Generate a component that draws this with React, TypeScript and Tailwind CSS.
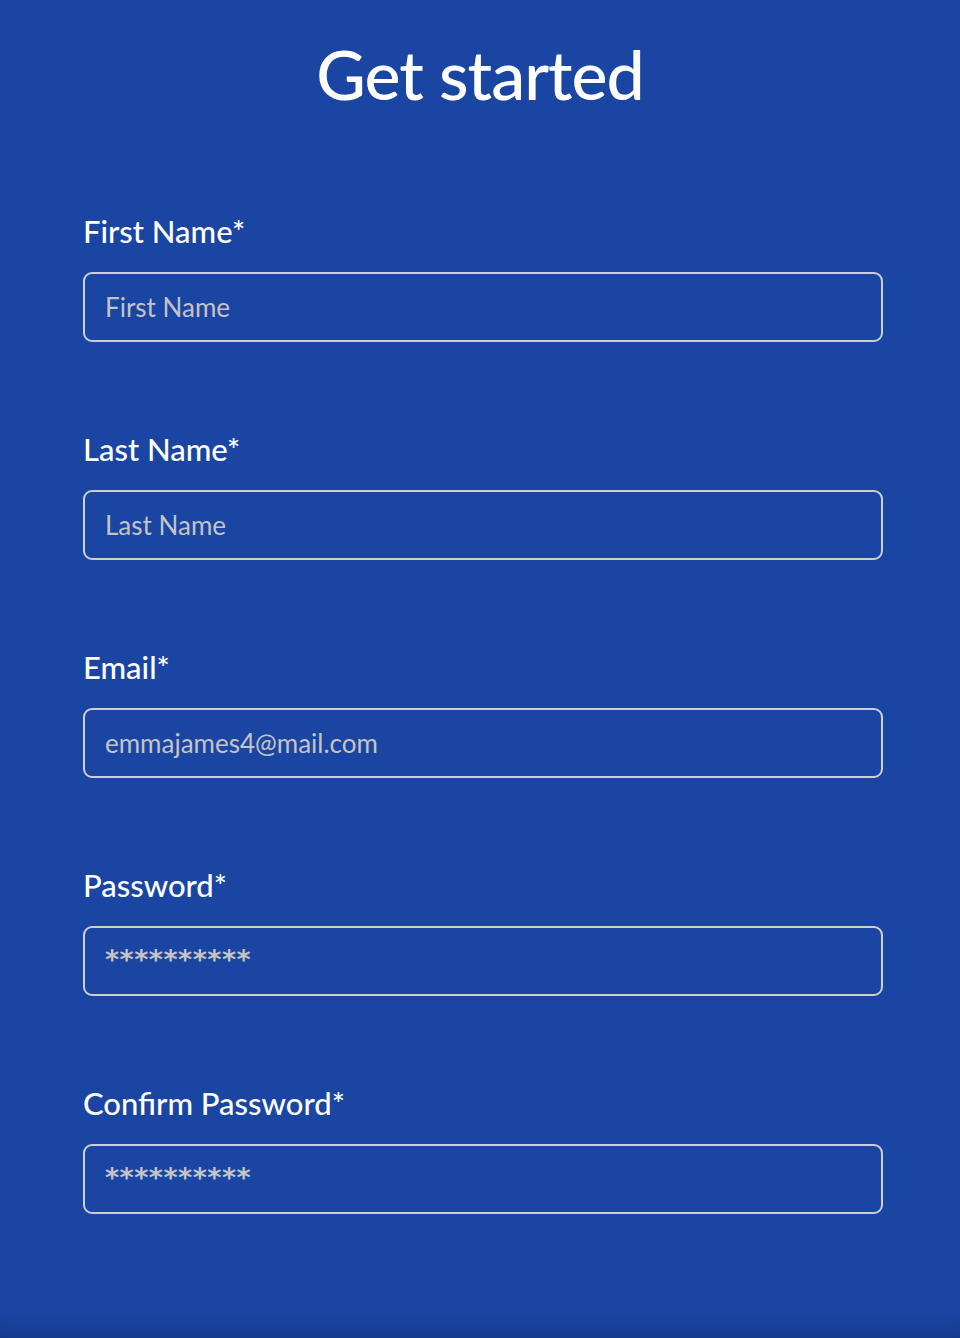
import React from 'react';

const fields = [
  { label: 'First Name*', placeholder: 'First Name', secret: false },
  { label: 'Last Name*', placeholder: 'Last Name', secret: false },
  { label: 'Email*', placeholder: 'emmajames4@mail.com', secret: false },
  { label: 'Password*', placeholder: '**********', secret: true },
  { label: 'Confirm Password*', placeholder: '**********', secret: true },
];

export default function App() {
  return (
    <div
      className="min-h-screen bg-[#1a45a3] shadow-[inset_0_-24px_24px_-16px_rgba(0,0,0,0.18)]"
      style={{ fontFamily: 'Lato, "Open Sans", sans-serif' }}
    >
      <div className="pt-[34px] pb-[120px]">
        <h1 className="text-center text-[68px] leading-[80px] font-medium text-white tracking-[-1px]">
          Get started
        </h1>

        <form className="mt-[99px] ml-[83px] w-[800px] flex flex-col gap-[89px]">
          {fields.map((f) => (
            <div key={f.label} className="flex flex-col">
              <label className="text-[31px] leading-[36px] text-white font-medium">{f.label}</label>
              <input
                type="text"
                placeholder={f.placeholder}
                className={
                  f.secret
                    ? "mt-[23px] h-[70px] w-full rounded-[9px] border-2 border-[#cfcfcf] bg-transparent px-[20px] pb-[4px] font-['DejaVu_Sans'] text-[27px] font-bold tracking-[0.5px] text-white placeholder:text-[#c4c4c4] outline-none"
                    : 'mt-[23px] h-[70px] w-full rounded-[9px] border-2 border-[#cfcfcf] bg-transparent px-[20px] text-[26px] text-white placeholder:text-[#c4c4c4] outline-none'
                }
              />
            </div>
          ))}
        </form>
      </div>
    </div>
  );
}
